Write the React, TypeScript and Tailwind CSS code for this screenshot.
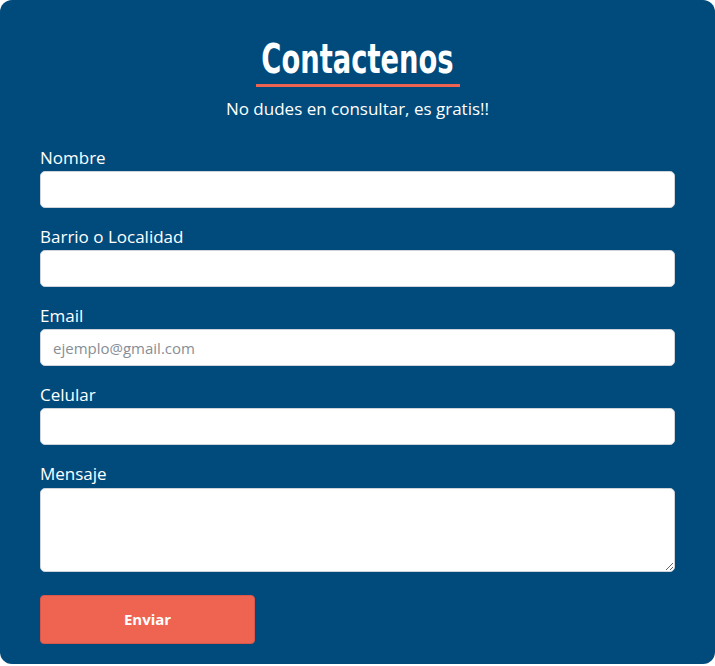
import React from 'react';

const fields = [
  { label: 'Nombre', placeholder: '' },
  { label: 'Barrio o Localidad', placeholder: '' },
  { label: 'Email', placeholder: 'ejemplo@gmail.com' },
  { label: 'Celular', placeholder: '' },
];

export default function App() {
  return (
    <div className="min-h-screen bg-white" style={{ fontFamily: '"Open Sans", Lato, sans-serif' }}>
      <div className="h-[664px] rounded-[12px] bg-[#014b7c] px-10 pt-[36px]">
        {/* Heading */}
        <div className="flex flex-col items-center">
          <h1
            className="flex w-[204px] justify-center border-b-[3px] border-[#ef6351] pb-[2px] text-[40px] font-bold leading-[46px] text-white"
            style={{ fontFamily: '"DejaVu Sans Condensed", sans-serif' }}
          >
            <span className="inline-block shrink-0 scale-x-[0.76] whitespace-nowrap">Contactenos</span>
          </h1>
          <p className="mt-[10px] text-[17px] leading-6 text-white">No dudes en consultar, es gratis!!</p>
        </div>

        <form className="mt-[25px]" onSubmit={(e) => e.preventDefault()}>
          {fields.map((f) => (
            <div key={f.label} className="mb-[17px]">
              <label className="mb-px block text-[17px] leading-6 text-white">{f.label}</label>
              <input
                type="text"
                placeholder={f.placeholder}
                className="block h-[37px] w-full rounded-[5px] border border-[#ced4da] bg-white px-3 text-[15px] text-gray-800 outline-none placeholder:text-[#868e96]"
              />
            </div>
          ))}
          <div className="mb-[23px]">
            <label className="mb-[2px] block text-[17px] leading-6 text-white">Mensaje</label>
            <textarea className="block h-[84px] w-full rounded-[5px] border border-[#ced4da] bg-white px-3 py-2 text-[15px] outline-none" />
          </div>
          <button
            type="submit"
            className="h-[49px] w-[215px] rounded-[4px] border border-[#d9574a] bg-[#ef6351] text-[15px] font-bold text-white"
          >
            Enviar
          </button>
        </form>
      </div>
    </div>
  );
}
